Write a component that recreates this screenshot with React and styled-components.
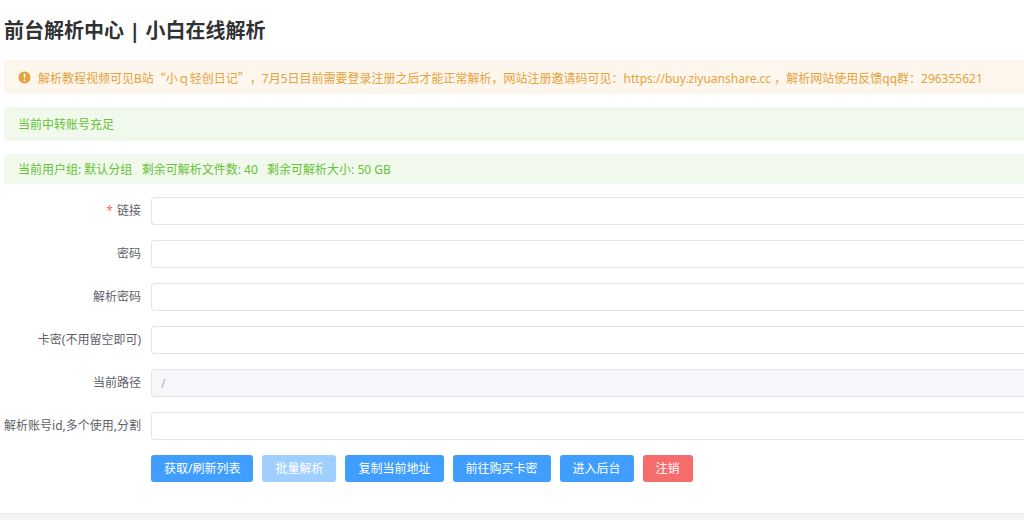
import React from "react";
import styled, { createGlobalStyle, css } from "styled-components";

const GlobalStyle = createGlobalStyle`
  * { box-sizing: border-box; }
  body {
    margin: 0;
    background: #f5f5f6;
    color: #606266;
    font-family: "Noto Sans", "Noto Sans CJK SC", sans-serif;
    font-size: 12px;
    text-spacing-trim: space-all;
  }
  button, input { font: inherit; }
`;

const Card = styled.main`
  background: #fff;
  padding: 14px 0 31px 4px;
  border-bottom: 1px solid #ebecef;
  box-shadow: 0 1px 6px rgba(0, 0, 0, 0.1);
  overflow: hidden;
`;

const Title = styled.h1`
  margin: 0 0 12px;
  color: #303133;
  font-size: 20px;
  font-weight: 700;
  line-height: 34px;
`;

const tones = {
  warning: css`
    background: #fdf6ec;
    color: #e6a23c;
  `,
  success: css`
    background: #f0f9eb;
    color: #67c23a;
  `,
};

const Alert = styled.div`
  display: flex;
  align-items: center;
  gap: 7px;
  height: ${(p) => (p.$compact ? 30 : 34)}px;
  margin-bottom: 13px;
  padding: 0 14px;
  border-radius: 4px 0 0 4px;
  white-space: nowrap;
  ${(p) => tones[p.$tone]}
`;

const Text = styled.p`
  margin: 0;
  padding-top: 2px;
  line-height: 18px;
  white-space: pre;
`;

const Wide = styled.span`
  font-family: "Noto Sans CJK SC", sans-serif;
`;

const Form = styled.form`
  display: flex;
  flex-direction: column;
  gap: 15px;
`;

const Row = styled.div`
  display: grid;
  grid-template-columns: 137px minmax(0, 1fr);
  column-gap: 10px;
  align-items: center;
`;

const Label = styled.label`
  text-align: right;
  line-height: 28px;
  white-space: nowrap;
`;

const Star = styled.span`
  margin-right: 4px;
  color: #f56c6c;
`;

const Input = styled.input`
  width: 100%;
  height: 28px;
  padding: 0 9px;
  border: 1px solid #e2e4ea;
  border-right: 0;
  border-radius: 4px 0 0 4px;
  background: #fff;
  color: #606266;
  outline: none;

  &:disabled {
    background: #f5f7fa;
    color: #a8abb2;
  }
`;

const Actions = styled.div`
  grid-column: 2;
  display: flex;
  gap: 9px;
`;

const Button = styled.button`
  height: 27px;
  padding: 0 13px 2px;
  border: 0;
  border-radius: 3px;
  background: ${(p) => (p.$danger ? "#f56c6c" : "#409eff")};
  color: #fff;
  white-space: nowrap;

  &:disabled {
    background: #a0cfff;
  }
`;

const WarningIcon = () => (
  <svg width="13" height="13" viewBox="0 0 13 13" aria-hidden="true">
    <circle cx="6.5" cy="6.5" r="6" fill="#e6a23c" />
    <path d="M5.6 2.8h1.8L7.1 7.6H5.9z" fill="#fff" />
    <circle cx="6.5" cy="9.4" r=".9" fill="#fff" />
  </svg>
);

const fields = [
  { id: "url", label: "链接", required: true },
  { id: "pwd", label: "密码" },
  { id: "parse-pwd", label: "解析密码" },
  { id: "card", label: "卡密(不用留空即可)" },
  { id: "path", label: "当前路径", value: "/", disabled: true },
  { id: "account", label: "解析账号id,多个使用,分割" },
];

const actions = [
  { text: "获取/刷新列表" },
  { text: "批量解析", disabled: true },
  { text: "复制当前地址" },
  { text: "前往购买卡密" },
  { text: "进入后台" },
  { text: "注销", danger: true },
];

export default function App() {
  return (
    <>
      <GlobalStyle />
      <Card lang="zh-CN">
        <Title>前台解析中心 | 小白在线解析</Title>
        <Alert $tone="warning" role="alert">
          <WarningIcon />
          <Text>
            解析教程视频可见B站<Wide>“</Wide>小ｑ轻创日记<Wide>”</Wide>，7月5日目前需要登录注册之后才能正常解析，网站注册邀请码可见：https://buy.ziyuanshare.cc ，解析网站使用反馈qq群：296355621
          </Text>
        </Alert>
        <Alert $tone="success" role="status">
          <Text>当前中转账号充足</Text>
        </Alert>
        <Alert $tone="success" $compact role="status">
          <Text>{"当前用户组: 默认分组   剩余可解析文件数: 40   剩余可解析大小: 50 GB"}</Text>
        </Alert>
        <Form onSubmit={(e) => e.preventDefault()}>
          {fields.map((f) => (
            <Row key={f.id}>
              <Label htmlFor={f.id}>
                {f.required && <Star>*</Star>}
                {f.label}
              </Label>
              <Input id={f.id} type="text" defaultValue={f.value} disabled={f.disabled} required={f.required} />
            </Row>
          ))}
          <Row>
            <Actions>
              {actions.map((a) => (
                <Button key={a.text} type="button" disabled={a.disabled} $danger={a.danger}>
                  {a.text}
                </Button>
              ))}
            </Actions>
          </Row>
        </Form>
      </Card>
    </>
  );
}
